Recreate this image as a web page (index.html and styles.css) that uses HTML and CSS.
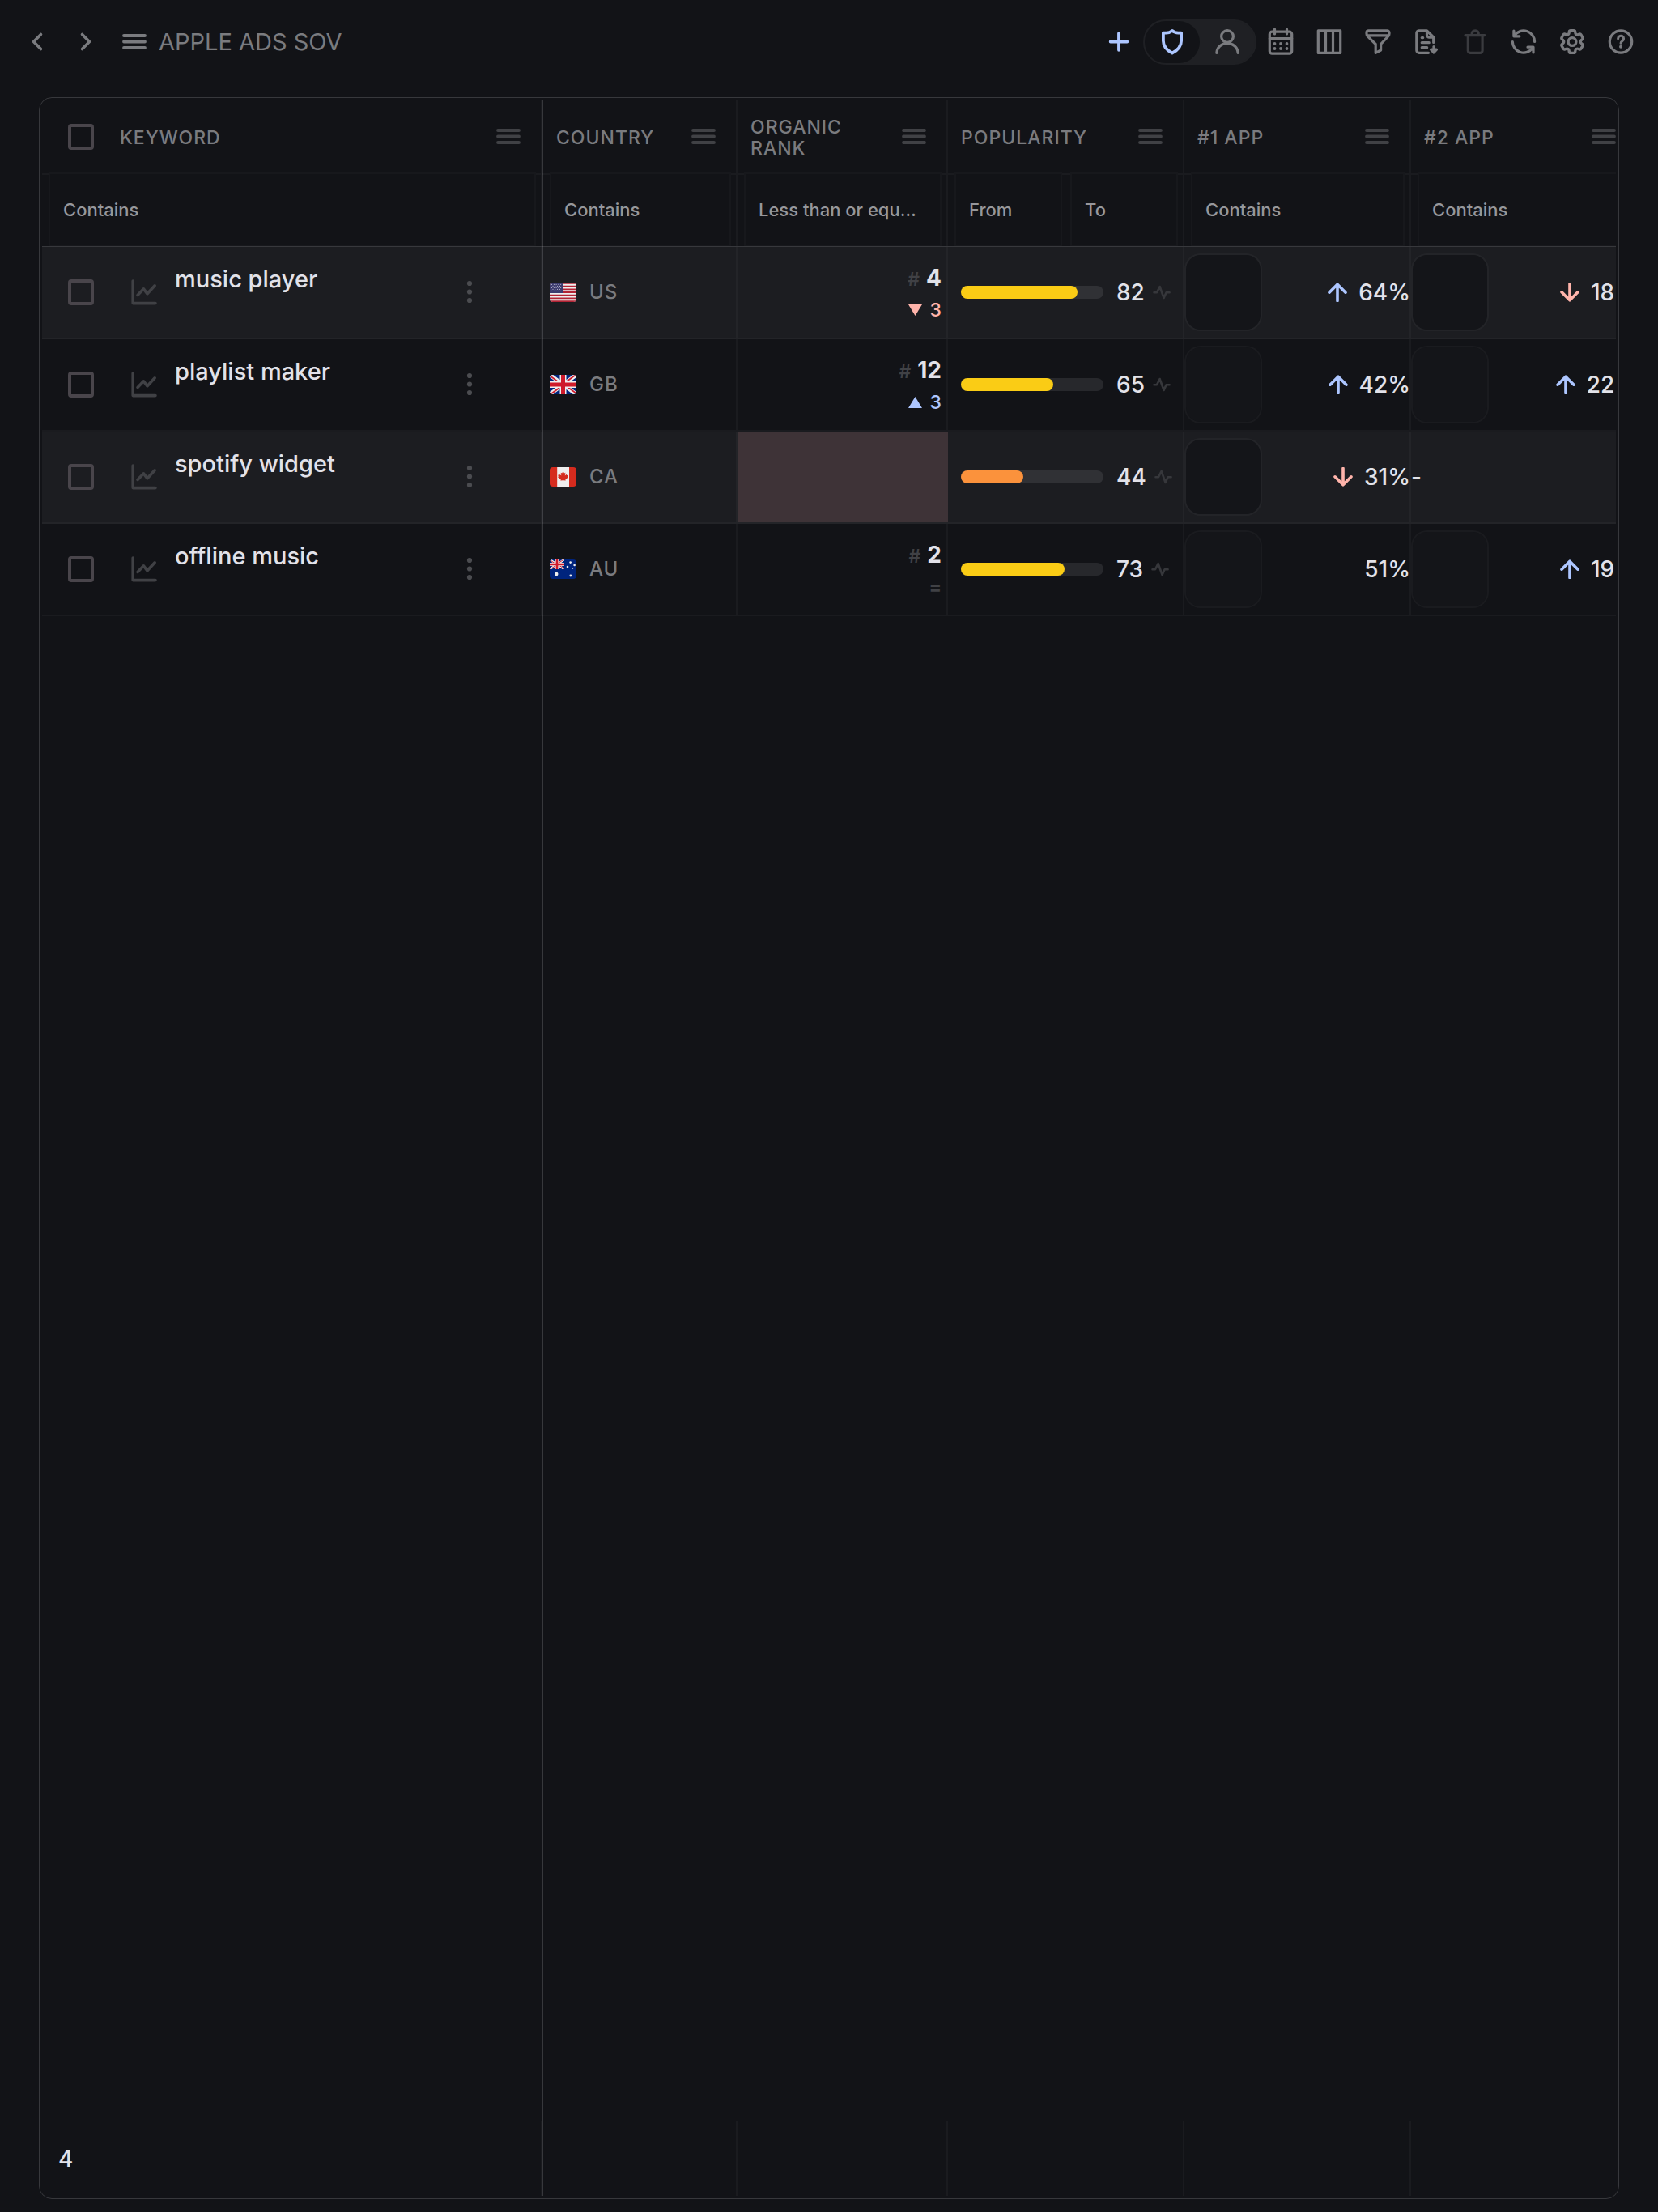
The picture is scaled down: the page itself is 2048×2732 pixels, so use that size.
FILE: index.html
```html
<!DOCTYPE html>
<html lang="en">
<head>
<meta charset="utf-8">
<meta name="viewport" content="width=device-width, initial-scale=1">
<title>Apple Ads SOV</title>
<link rel="stylesheet" href="styles.css">
</head>
<body>
<svg class="sprite" aria-hidden="true">
  <symbol id="menu" viewBox="0 0 32 32"><path d="M3 8h26M3 15.5h26M3 23h26" stroke-width="3.8"/></symbol>
  <symbol id="chart" viewBox="0 0 32 32"><path d="M2.2 2v27.6H30M8 19.4l7.4-7.6 4.6 6 9.2-10" stroke-width="3.6"/></symbol>
  <symbol id="dots" viewBox="0 0 32 32"><g fill="currentColor" stroke="none"><circle cx="16" cy="5" r="3.1"/><circle cx="16" cy="15.5" r="3.1"/><circle cx="16" cy="26" r="3.1"/></g></symbol>
  <symbol id="pulse" viewBox="0 0 22 18"><path d="M1.5 9.2H5L8.6 2l5 14 3-6.8h4" stroke-width="2.6"/></symbol>
  <symbol id="up" viewBox="0 0 24 24"><path d="M12 22.5V2.5M2 12.2l10-10 10 10" stroke-width="3.6"/></symbol>
  <symbol id="down" viewBox="0 0 24 24"><path d="M12 1.5v20M2 11.8l10 10 10-10" stroke-width="3.6"/></symbol>
  <symbol id="us" viewBox="0 0 33 24">
    <path fill="#eee" stroke="none" d="M0 0h33v24H0z"/>
    <path stroke="#b22334" stroke-width="1.85" stroke-linecap="butt" d="M0 .9h33M0 4.6h33M0 8.3h33M0 12h33M0 15.7h33M0 19.4h33M0 23.1h33"/>
    <path fill="#3c3b6e" stroke="none" d="M0 0h17v12.9H0z"/>
    <path stroke="#d8d8e6" stroke-width="1" stroke-dasharray="0 2.8" d="M2.5 2.4h13M4 4.4h11M2.5 6.4h13M4 8.4h11M2.5 10.4h13"/>
  </symbol>
  <symbol id="gb" viewBox="0 0 33 24">
    <path fill="#00247d" stroke="none" d="M0 0h33v24H0z"/>
    <path stroke="#eee" stroke-width="5" d="M0 0l33 24M33 0L0 24"/>
    <path stroke="#cf1b2b" stroke-width="1.8" d="M0 1l13 9.4M33 23l-13-9.4M32 0L19 9.4M1 24l13-9.4"/>
    <path stroke="#eee" stroke-width="8" d="M16.5 0v24M0 12h33"/>
    <path stroke="#cf1b2b" stroke-width="5" d="M16.5 0v24M0 12h33"/>
  </symbol>
  <symbol id="ca" viewBox="0 0 33 24">
    <path fill="#d52b1e" stroke="none" d="M0 0h33v24H0z"/>
    <path fill="#eee" stroke="none" d="M9.2 0h14.8v24H9.2z"/>
    <path fill="#d52b1e" stroke="none" d="M16.6 5l1.4 2.5 1.4-.7-.6 3.8 1.8-1.8.4 1.1 2-.3-.7 2 .8.7-3.7 3 .3 1.3-2.8-.4V19h-.7v-2.8l-2.8.4.3-1.3-3.7-3 .8-.7-.7-2 2 .3.4-1.1 1.8 1.8-.6-3.8 1.4.7z"/>
  </symbol>
  <symbol id="au" viewBox="0 0 33 24">
    <path fill="#00247d" stroke="none" d="M0 0h33v24H0z"/>
    <svg width="18" height="12" viewBox="0 0 33 24" preserveAspectRatio="none"><use href="#gb"/></svg>
    <g fill="#eee" stroke="none"><circle cx="8.3" cy="18" r="2.2"/><circle cx="25.6" cy="3.6" r="1.3"/><circle cx="22" cy="9" r="1.3"/><circle cx="30.6" cy="7" r="1.3"/><circle cx="28.4" cy="11" r=".8"/><circle cx="25.8" cy="20" r="1.4"/></g>
  </symbol>
</svg>

<header class="toolbar">
  <nav class="group">
    <button class="tool" aria-label="Back"><svg class="icon" viewBox="0 0 32 32"><path d="M20.5 6.5L11.5 15.5l9 9" stroke-width="3.6"/></svg></button>
    <button class="tool" aria-label="Forward"><svg class="icon" viewBox="0 0 32 32"><path d="M11.5 6.5l9 9-9 9" stroke-width="3.6"/></svg></button>
    <button class="tool" aria-label="Menu"><svg class="icon"><use href="#menu"/></svg></button>
    <h1 class="title">APPLE ADS SOV</h1>
  </nav>
  <div class="group">
    <button class="tool accent" aria-label="Add"><svg class="icon" viewBox="0 0 32 32"><path d="M16 5.2v20.6M5.7 15.5h20.6" stroke-width="3.8"/></svg></button>
    <div class="switch">
      <button class="switch-item active" aria-label="Protected"><svg class="icon" viewBox="0 0 32 32"><path d="M16 1.9C14 3.6 11 4.6 8.6 4.6H4.9V14.500c0 7.500 4.200 11.500 11.100 15 6.900-3.500 11.100-7.500 11.100-15V4.600h-3.700C21 4.600 18 3.600 16 1.900z" stroke-width="3.800"/></svg></button>
      <button class="switch-item" aria-label="User"><svg class="icon" viewBox="0 0 32 32"><circle cx="16" cy="9" r="7.4"/><path d="M2.800 29.500C3.200 22.500 9 17.300 16 17.300s12.800 5.200 13.200 12.200"/></svg></button>
    </div>
    <button class="tool" aria-label="Calendar"><svg class="icon" viewBox="0 0 32 32"><rect x="2.300" y="3.200" width="27.400" height="27" rx="3"/><path d="M2.300 11.700h27.400M8.500 0v6M23.500 0v6"/><g fill="currentColor" stroke="none"><circle cx="8.500" cy="18" r="1.900"/><circle cx="16" cy="18" r="1.900"/><circle cx="23.500" cy="18" r="1.900"/><circle cx="8.500" cy="24" r="1.900"/><circle cx="16" cy="24" r="1.900"/><circle cx="23.500" cy="24" r="1.900"/></g></svg></button>
    <button class="tool" aria-label="Columns"><svg class="icon" viewBox="0 0 32 32"><path d="M2.300 1.800h27.400v27.600H2.300zM11.500 2v27M20.500 2v27"/></svg></button>
    <button class="tool" aria-label="Filter"><svg class="icon" viewBox="0 0 32 32"><path d="M4.500 1.800h23a2.500 2.500 0 0 1 2.500 2.500v1.400c0 1.300-.5 2.300-1.300 3.200L19.600 18.500v7.500l-6.400 3.400V18.500L3.300 8.900C2.500 8 2 7 2 5.700V4.300a2.500 2.500 0 0 1 2.500-2.500zM3 7.900h26"/></svg></button>
    <button class="tool" aria-label="Export"><svg class="icon" viewBox="0 0 32 32"><path d="M18.500 29.300H6.800a3 3 0 0 1-3-3V4.800a3 3 0 0 1 3-3h9.700l8.200 8.200v6.500M16.500 2v5.200a3 3 0 0 0 3 3h5M10.200 10.600h1.500M10.200 16.700h9M10.200 22.700h6.500M25 21.500v4"/><path d="M21.500 25.200h7L25 29z" fill="currentColor"/></svg></button>
    <button class="tool" aria-label="Delete" disabled><svg class="icon" viewBox="0 0 32 32"><path d="M4 7.600h24M7.300 8v18.600a2.800 2.800 0 0 0 2.800 2.800h12.200a2.800 2.800 0 0 0 2.800-2.800V8M12 7c0-3.600 1.600-5.200 4.200-5.200S20.400 3.400 20.400 7"/></svg></button>
    <button class="tool" aria-label="Refresh"><svg class="icon" viewBox="0 0 32 32"><path d="M29.600 15.500A13.700 13.700 0 0 0 4.800 7.600M3.900 2v6.800h7M2.300 15.500a13.700 13.700 0 0 0 24.800 7.900M28 29v-6.800h-7"/></svg></button>
    <button class="tool" aria-label="Settings"><svg class="icon" viewBox="1.550 1.850 20.900 20.900"><path stroke-width="2.200" d="M9.594 3.940c.09-.542.56-.94 1.110-.94h2.593c.55 0 1.020.398 1.110.94l.213 1.281c.063.374.313.686.645.87.074.04.147.083.22.127.325.196.72.257 1.075.124l1.217-.456a1.125 1.125 0 0 1 1.370.49l1.296 2.247a1.125 1.125 0 0 1-.26 1.431l-1.003.827c-.293.241-.438.613-.43.992a7.723 7.723 0 0 1 0 .255c-.008.378.137.75.43.991l1.004.827c.424.35.534.955.26 1.430l-1.298 2.247a1.125 1.125 0 0 1-1.369.491l-1.217-.456c-.355-.133-.75-.072-1.076.124a6.470 6.470 0 0 1-.22.128c-.331.183-.581.495-.644.869l-.213 1.281c-.09.543-.56.94-1.110.94h-2.594c-.55 0-1.019-.398-1.110-.94l-.213-1.281c-.062-.374-.312-.686-.644-.87a6.520 6.520 0 0 1-.22-.127c-.325-.196-.72-.257-1.076-.124l-1.217.456a1.125 1.125 0 0 1-1.369-.49l-1.297-2.247a1.125 1.125 0 0 1 .26-1.431l1.004-.827c.292-.24.437-.613.43-.991a6.932 6.932 0 0 1 0-.255c.007-.38-.138-.751-.43-.992l-1.004-.827a1.125 1.125 0 0 1-.26-1.430l1.297-2.247a1.125 1.125 0 0 1 1.370-.491l1.216.456c.356.133.751.072 1.076-.124.072-.044.146-.086.22-.128.332-.183.582-.495.644-.869l.214-1.280Z"/><circle cx="12" cy="12" r="3.200" stroke-width="2.200"/></svg></button>
    <button class="tool" aria-label="Help"><svg class="icon" viewBox="0 0 32 32"><circle cx="16" cy="15.500" r="13.700"/><path d="M12.600 11.700a3.500 3.500 0 1 1 5.300 3c-1.300.8-1.900 1.400-1.900 2.600" stroke-width="3"/><circle cx="16" cy="21.700" r="2" fill="currentColor" stroke="none"/></svg></button>
  </div>
</header>

<main class="frame">
  <div class="scroller">
    <table class="grid">
      <thead>
        <tr class="head">
          <th class="lead" scope="col"><input type="checkbox" class="check" aria-label="Select all"><span class="label">KEYWORD</span><button class="menu" aria-label="Keyword column menu"><svg class="icon"><use href="#menu"/></svg></button></th>
          <th scope="col"><span class="label">COUNTRY</span><button class="menu" aria-label="Country column menu"><svg class="icon"><use href="#menu"/></svg></button></th>
          <th scope="col"><span class="label">ORGANIC RANK</span><button class="menu" aria-label="Organic rank column menu"><svg class="icon"><use href="#menu"/></svg></button></th>
          <th scope="col"><span class="label">POPULARITY</span><button class="menu" aria-label="Popularity column menu"><svg class="icon"><use href="#menu"/></svg></button></th>
          <th scope="col"><span class="label">#1 APP</span><button class="menu" aria-label="#1 app column menu"><svg class="icon"><use href="#menu"/></svg></button></th>
          <th scope="col"><span class="label">#2 APP</span><button class="menu" aria-label="#2 app column menu"><svg class="icon"><use href="#menu"/></svg></button></th>
        </tr>
        <tr class="filters">
          <td class="lead"><input class="filter" type="text" placeholder="Contains" aria-label="Keyword contains"></td>
          <td><input class="filter" type="text" placeholder="Contains" aria-label="Country contains"></td>
          <td><input class="filter" type="text" placeholder="Less than or equal to" aria-label="Organic rank less than or equal to"></td>
          <td><input class="filter" type="text" placeholder="From" aria-label="Popularity from"><input class="filter" type="text" placeholder="To" aria-label="Popularity to"></td>
          <td><input class="filter" type="text" placeholder="Contains" aria-label="#1 app contains"></td>
          <td><input class="filter" type="text" placeholder="Contains" aria-label="#2 app contains"></td>
        </tr>
      </thead>
      <tbody>
        <tr class="row">
          <td class="lead"><input type="checkbox" class="check" aria-label="Select music player"><button class="chart" aria-label="Chart"><svg class="icon"><use href="#chart"/></svg></button><span class="keyword">music player</span><button class="more" aria-label="More"><svg class="icon"><use href="#dots"/></svg></button></td>
          <td class="country"><svg class="flag"><use href="#us"/></svg><span>US</span></td>
          <td class="rank"><div class="position"><span class="hash">#</span><b>4</b></div><div class="change fall"><svg class="triangle" viewBox="0 0 17 14"><path d="M0 0h17L8.500 14z"/></svg>3</div></td>
          <td class="popularity"><div class="track"><div class="bar" style="width:82%"></div></div><span class="score">82</span><svg class="pulse"><use href="#pulse"/></svg></td>
          <td class="app"><div class="artwork"></div><div class="share"><svg class="arrow rise"><use href="#up"/></svg>64%</div></td>
          <td class="app"><div class="artwork"></div><div class="share"><svg class="arrow fall"><use href="#down"/></svg>18%</div></td>
        </tr>
        <tr class="row">
          <td class="lead"><input type="checkbox" class="check" aria-label="Select playlist maker"><button class="chart" aria-label="Chart"><svg class="icon"><use href="#chart"/></svg></button><span class="keyword">playlist maker</span><button class="more" aria-label="More"><svg class="icon"><use href="#dots"/></svg></button></td>
          <td class="country"><svg class="flag"><use href="#gb"/></svg><span>GB</span></td>
          <td class="rank"><div class="position"><span class="hash">#</span><b>12</b></div><div class="change rise"><svg class="triangle" viewBox="0 0 17 14"><path d="M0 14h17L8.500 0z"/></svg>3</div></td>
          <td class="popularity"><div class="track"><div class="bar" style="width:65%"></div></div><span class="score">65</span><svg class="pulse"><use href="#pulse"/></svg></td>
          <td class="app"><div class="artwork"></div><div class="share"><svg class="arrow rise"><use href="#up"/></svg>42%</div></td>
          <td class="app"><div class="artwork"></div><div class="share"><svg class="arrow rise"><use href="#up"/></svg>22%</div></td>
        </tr>
        <tr class="row">
          <td class="lead"><input type="checkbox" class="check" aria-label="Select spotify widget"><button class="chart" aria-label="Chart"><svg class="icon"><use href="#chart"/></svg></button><span class="keyword">spotify widget</span><button class="more" aria-label="More"><svg class="icon"><use href="#dots"/></svg></button></td>
          <td class="country"><svg class="flag"><use href="#ca"/></svg><span>CA</span></td>
          <td class="rank missing"></td>
          <td class="popularity"><div class="track"><div class="bar medium" style="width:44%"></div></div><span class="score">44</span><svg class="pulse"><use href="#pulse"/></svg></td>
          <td class="app"><div class="artwork"></div><div class="share"><svg class="arrow fall"><use href="#down"/></svg>31%</div></td>
          <td class="app">-</td>
        </tr>
        <tr class="row">
          <td class="lead"><input type="checkbox" class="check" aria-label="Select offline music"><button class="chart" aria-label="Chart"><svg class="icon"><use href="#chart"/></svg></button><span class="keyword">offline music</span><button class="more" aria-label="More"><svg class="icon"><use href="#dots"/></svg></button></td>
          <td class="country"><svg class="flag"><use href="#au"/></svg><span>AU</span></td>
          <td class="rank"><div class="position"><span class="hash">#</span><b>2</b></div><div class="change same">=</div></td>
          <td class="popularity"><div class="track"><div class="bar" style="width:73%"></div></div><span class="score">73</span><svg class="pulse"><use href="#pulse"/></svg></td>
          <td class="app"><div class="artwork"></div><div class="share">51%</div></td>
          <td class="app"><div class="artwork"></div><div class="share"><svg class="arrow rise"><use href="#up"/></svg>19%</div></td>
        </tr>
      </tbody>
      <tfoot>
        <tr class="totals"><td class="lead">4</td><td></td><td></td><td></td><td></td><td></td></tr>
      </tfoot>
    </table>
  </div>
</main>
</body>
</html>
```
FILE: styles.css
```css
:root {
  --bg: #121317;
  --text: #e2e2e9;
  --muted: #7a7b7f;
  --faint: #404145;
  --accent: #adc6ff;
  --danger: #ffb4ab;
  --line: rgba(226, 226, 233, 0.18);
  --hairline: rgba(226, 226, 233, 0.04);
}

* { box-sizing: border-box; }

body {
  margin: 0;
  min-height: 100vh;
  display: flex;
  flex-direction: column;
  background: var(--bg);
  color: var(--text);
  font-family: Inter, "Liberation Sans", sans-serif;
  font-size: 28px;
  font-weight: 500;
  line-height: 34px;
}

button {
  display: flex;
  align-items: center;
  justify-content: center;
  padding: 0;
  border: 0;
  background: none;
  color: inherit;
  font: inherit;
}

svg {
  flex: none;
  fill: none;
  stroke: currentColor;
  stroke-width: 3.2;
  stroke-linecap: round;
  stroke-linejoin: round;
}

.sprite { position: absolute; width: 0; height: 0; }
.icon { width: 32px; height: 32px; overflow: visible; }

/* Toolbar */
.toolbar {
  display: flex;
  justify-content: space-between;
  align-items: center;
  padding: 24px 16px 40px;
  color: var(--muted);
}
.group { display: flex; align-items: center; }
.tool { width: 60px; height: 56px; }
.tool:disabled { color: #3a3b3f; }
.accent { color: var(--accent); }
.title { margin: 0; font-size: 29px; font-weight: 400; }
.switch {
  display: flex;
  height: 56px;
  border: 2px solid #1f2024;
  border-radius: 28px;
  background: #1f2024;
}
.switch-item { width: 68px; border-radius: 26px; }
.switch-item.active { background: var(--bg); color: var(--accent); }

/* Grid */
.frame {
  flex: 1;
  display: flex;
  margin: 0 48px 16px;
  padding: 3px;
  border: 1px solid #37383c;
  border-radius: 16px;
}
.scroller {
  flex: 1;
  min-width: 0;
  display: flex;
  overflow-x: auto;
  scrollbar-width: none;
}
.grid {
  position: relative;
  flex: 1 0 auto;
  display: flex;
  flex-direction: column;
}
.grid::after {
  content: "";
  position: absolute;
  top: 0;
  bottom: 0;
  left: 618px;
  width: 1px;
  background: var(--line);
}
thead, tfoot { display: block; }
tbody { display: block; flex: 1; }
tr {
  display: grid;
  grid-template-columns: 619px 240px 260px 292px 280px 280px;
}
th, td {
  display: flex;
  align-items: center;
  min-width: 0;
  padding: 0;
  border-right: 2px solid var(--hairline);
}
.lead { margin-right: 1px; }

.head { height: 92px; border-bottom: 2px solid var(--hairline); }
.head th { gap: 16px; padding: 0 24px 0 16px; }
.head .lead { gap: 32px; padding-left: 32px; }
.label {
  flex: 1;
  padding-top: 2px;
  color: var(--muted);
  font-size: 23px;
  font-weight: 550;
  line-height: 26px;
  letter-spacing: 1px;
  text-align: left;
}
.menu { color: var(--faint); }

.check {
  flex: none;
  appearance: none;
  width: 32px;
  height: 32px;
  margin: 0;
  border: 4px solid #49454b;
  border-radius: 4px;
}

.filters { height: 89px; border-bottom: 1px solid var(--line); }
.filters td { align-items: stretch; gap: 10px; padding: 0 6px 0 8px; }
.filter {
  flex: 1;
  min-width: 0;
  margin: -3px 0 0;
  padding: 0 20px 0 16px;
  border: 2px solid #17181c;
  background: var(--bg);
  color: var(--text);
  font: 500 22px/28px Inter, "Liberation Sans", sans-serif;
  text-overflow: ellipsis;
}
.filter::placeholder { color: #96979b; opacity: 1; }

.row { height: 114px; border-bottom: 2px solid var(--hairline); }
.row:nth-child(odd) { background: #1c1d21; }
.row .lead { padding: 0 72px 0 32px; }
.chart { margin: 0 22px 0 46px; color: var(--faint); }
.keyword { flex: 1; padding-bottom: 32px; font-size: 29px; font-weight: 450; }
.more { color: #4b4c50; }

.country { gap: 16px; padding-left: 8px; color: var(--muted); font-size: 24px; letter-spacing: 1px; }
.flag { width: 33px; height: 24px; border-radius: 4px; }

.rank {
  flex-direction: column;
  align-items: flex-end;
  justify-content: center;
  gap: 4px;
  padding: 4px 6px 0 0;
}
.rank.missing { border-color: transparent; background: #3e3337; }
.position { display: flex; align-items: baseline; gap: 8px; }
.position b { font-weight: 700; }
.hash { color: var(--faint); font-size: 23px; font-weight: 600; }
.change { display: flex; align-items: center; gap: 10px; font-size: 23px; font-weight: 450; }
.triangle { width: 17px; height: 14px; fill: currentColor; stroke: none; }
.rise { color: var(--accent); }
.fall { color: var(--danger); }
.same { color: var(--faint); font-weight: 700; }

.popularity { padding-left: 16px; }
.track {
  width: 176px;
  height: 16px;
  border-radius: 8px;
  background: rgba(226, 226, 233, 0.1);
}
.bar { height: 16px; border-radius: 8px; background: #facc15; }
.bar.medium { background: #fb923c; }
.score { margin: 0 10px 0 16px; }
.pulse { width: 22px; height: 18px; color: #36373b; }

.artwork {
  flex: none;
  width: 96px;
  height: 96px;
  border: 2px solid var(--hairline);
  border-radius: 20px;
  background: #141519;
  background-clip: padding-box;
}
.share { display: flex; align-items: center; gap: 14px; margin: 0 -1px 0 auto; }
.arrow { width: 24px; height: 24px; }

.totals { height: 93px; border-top: 1px solid var(--line); }
.totals .lead { padding-left: 20px; }
```
